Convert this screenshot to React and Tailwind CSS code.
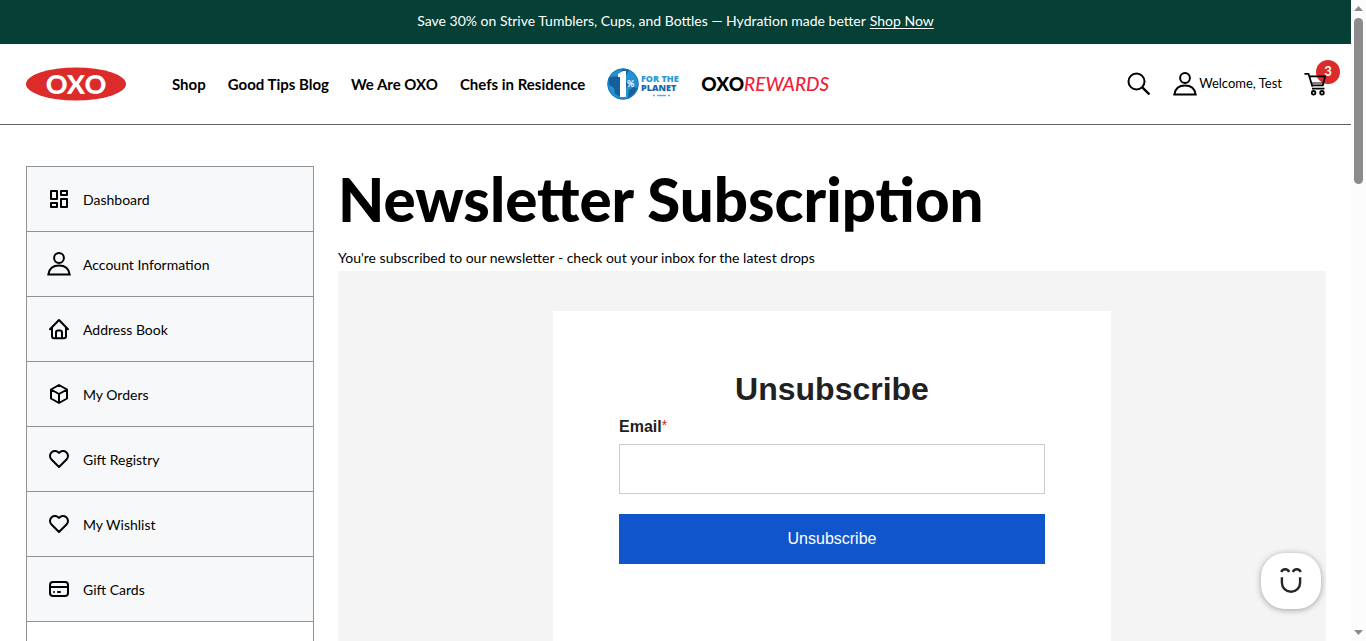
const iconProps = {
  width: 24,
  height: 24,
  viewBox: '0 0 24 24',
  fill: 'none',
  stroke: 'currentColor',
  strokeWidth: 2,
  'aria-hidden': true,
};

function DashboardIcon() {
  return (
    <svg {...iconProps}>
      <path d="M4 4h6v8H4zM14 4h6v4h-6zM14 12h6v8h-6zM4 16h6v4H4z" strokeLinejoin="round" />
    </svg>
  );
}

function UserIcon() {
  return (
    <svg {...iconProps}>
      <circle cx="12" cy="6" r="4.9" />
      <path d="M1.3 22.6C2.2 16.6 6.6 13.6 12 13.6s9.8 3 10.7 9z" />
    </svg>
  );
}

function HomeIcon() {
  return (
    <svg {...iconProps} strokeLinecap="round" strokeLinejoin="round">
      <path d="M3 12.2 12 3l9 9.2" />
      <path d="M5 11v8.2a2 2 0 0 0 2 2h10a2 2 0 0 0 2-2V11" />
      <path d="M9 21v-5.6a2 2 0 0 1 2-2h2a2 2 0 0 1 2 2V21" />
    </svg>
  );
}

function BoxIcon() {
  return (
    <svg {...iconProps} strokeLinejoin="round">
      <path d="m12 3 8 4.5v9L12 21l-8-4.5v-9zM12 12l8-4.5M12 12v9M12 12 4 7.5" />
    </svg>
  );
}

function HeartIcon() {
  return (
    <svg {...iconProps} strokeLinecap="round" strokeLinejoin="round">
      <path d="M19.5 12.572 12 20l-7.5-7.428A5 5 0 1 1 12 6.006a5 5 0 1 1 7.5 6.572" />
    </svg>
  );
}

function CardIcon() {
  return (
    <svg {...iconProps} strokeLinecap="round">
      <rect x="3" y="5" width="18" height="14" rx="3" />
      <path d="M3 10h18M7 15h.01M11 15h2" />
    </svg>
  );
}

const accountLinks = [
  ['Dashboard', DashboardIcon],
  ['Account Information', UserIcon],
  ['Address Book', HomeIcon],
  ['My Orders', BoxIcon],
  ['Gift Registry', HeartIcon],
  ['My Wishlist', HeartIcon],
  ['Gift Cards', CardIcon],
];

function OxoLogo() {
  return (
    <svg width="100" height="34" viewBox="0 0 100 34" role="img" aria-label="OXO">
      <ellipse cx="50" cy="17" rx="50" ry="16.6" fill="#db2b2b" />
      <text x="50" y="26.500" textAnchor="middle" fill="#fff" className="text-[27px] font-black">
        OXO
      </text>
    </svg>
  );
}

function PlanetLogo() {
  return (
    <svg width="76" height="34" viewBox="0 0 76 34" role="img" aria-label="1% for the Planet">
      <circle cx="16" cy="17" r="15.6" fill="#2491d0" />
      <path d="M2 11c4-3 8 0 10-3l4-6 6 1-4 8 3 7-4 5-3 7-6-3-1-6-5-3z" fill="#14609f" />
      <path d="M22 23l5-3 3 1c-2 5-5 8-9 10z" fill="#14609f" />
      <circle cx="16" cy="17" r="15.2" fill="none" stroke="#1b75b8" />
      <path d="M11 7l5-3h3v26h-6V10h-2z" fill="#fff" />
      <text x="20" y="20" fill="#fff" className="text-[9px] font-bold">%</text>
      <text x="34" y="15" fill="#2b9ad6" className="font-['Open_Sans'] text-[9px] font-extrabold">FOR THE</text>
      <text x="34" y="24" fill="#1766a8" className="font-['Open_Sans'] text-[9px] font-extrabold">PLANET</text>
      <path d="M46 28.5h2M50 28.5h9M61 28.5h2" stroke="#5fb0dc" strokeWidth="1.5" />
    </svg>
  );
}

function CartIcon() {
  return (
    <svg width="24" height="24" viewBox="0 0 24 24" fill="none" stroke="currentColor" strokeWidth="1.8" aria-hidden="true">
      <path d="M.5 1.8h4l4 13M6 4.3h15.200l-2.400 9H8M8 16.600h12.500" />
      <path d="M7.600 11h12" strokeWidth="1" />
      <circle cx="9.600" cy="20.800" r="1.800" />
      <circle cx="18" cy="20.800" r="1.800" />
    </svg>
  );
}

function Header() {
  return (
    <header>
      <div className="flex h-11 items-center justify-center gap-1 bg-[#063f36] pb-0.5 text-sm text-white">
        <span>Save 30% on Strive Tumblers, Cups, and Bottles — Hydration made better</span>
        <a href="#shop-now" className="underline underline-offset-2">Shop Now</a>
      </div>
      <div className="flex h-[81px] items-center border-b border-[#616166] pr-[11px] pl-[26px]">
        <a href="#home" aria-label="OXO home"><OxoLogo /></a>
        <nav className="ml-[46px] flex items-center gap-[22px] text-[15px] font-bold whitespace-nowrap">
          <a href="#shop">Shop</a>
          <a href="#blog">Good Tips Blog</a>
          <a href="#about">We Are OXO</a>
          <a href="#chefs">Chefs in Residence</a>
          <div className="flex items-center gap-[18px]">
            <a href="#planet" aria-label="1% for the Planet"><PlanetLogo /></a>
            <a href="#rewards" className="flex items-center text-[19px] font-normal">
              <span className="font-black">OXO</span>
              <span className="font-medium text-[#ef2038] italic">REWARDS</span>
            </a>
          </div>
        </nav>
        <div className="ml-auto flex items-center">
          <button type="button" aria-label="Search">
            <svg width="24" height="24" viewBox="0 0 24 24" fill="none" stroke="currentColor" strokeWidth="2" aria-hidden="true">
              <circle cx="9.5" cy="9.5" r="8" />
              <path d="m15.3 15.3 7.2 7.2" strokeWidth="2.4" />
            </svg>
          </button>
          <a href="#account" className="ml-[22px] flex items-center gap-0.5 text-[13px]">
            <UserIcon />
            Welcome, Test
          </a>
          <a href="#cart" aria-label="Cart, 3 items" className="relative ml-[22px] pr-3">
            <span className="absolute -top-3 right-0 flex size-6 items-center justify-center rounded-full bg-[#db2b2b] text-[13px] font-bold text-white">3</span>
            <span className="relative block"><CartIcon /></span>
          </a>
        </div>
      </div>
    </header>
  );
}

function Scrollbar() {
  return (
    <div aria-hidden="true" className="flex w-[15px] shrink-0 flex-col items-center bg-[#fcfcfc] py-1.5 text-[#8b8b8b]">
      <svg width="9" height="5" viewBox="0 0 9 5" fill="currentColor"><path d="M0 5 4.5 0 9 5z" /></svg>
      <div className="mt-[7px] h-[166px] w-[9px] rounded-full bg-[#8b8b8b]" />
      <svg className="mt-auto" width="9" height="5" viewBox="0 0 9 5" fill="currentColor"><path d="M0 0 4.5 5 9 0z" /></svg>
    </div>
  );
}

export default function App() {
  return (
    <div className="flex h-screen overflow-hidden bg-white font-['Lato',sans-serif] text-black">
      <div className="min-w-0 flex-1 overflow-hidden">
        <Header />
        <div className="flex gap-6 pt-[41px] pr-[25px] pl-[26px]">
          <nav aria-label="Account" className="w-72 shrink-0 border border-[#8f9193] text-sm">
            {accountLinks.map(([label, Icon]) => (
              <a key={label} href="#account" className="flex h-[65px] items-center gap-3 border-b border-[#8f9193] bg-[#f7f8fa] pl-5">
                <Icon />
                <span className="pt-0.5">{label}</span>
              </a>
            ))}
          </nav>
          <main className="min-w-0 flex-1">
            <h1 className="text-[60px] leading-[66px] font-black">Newsletter Subscription</h1>
            <p className="mt-3.5 pb-0.5 text-sm leading-[23px]">
              You're subscribed to our newsletter - check out your inbox for the latest drops
            </p>
            <div className="bg-[#f4f4f4] px-5 py-10 font-['Liberation_Sans',sans-serif] text-[#212121]">
              <form className="mx-auto max-w-[558px] bg-white px-[66px] pt-[58px] pb-24">
                <h2 className="text-center text-[32px] leading-10 font-bold">Unsubscribe</h2>
                <label htmlFor="email" className="mt-2 block text-base leading-[19px] font-bold">
                  Email<span className="align-top text-sm leading-4 font-normal text-[#e51520]">*</span>
                </label>
                <input id="email" type="email" required className="mt-2 block h-[50px] w-full border border-[#cccccc] px-3" />
                <button type="submit" className="mt-5 block h-[50px] w-full bg-[#1155cc] text-base text-white">Unsubscribe</button>
              </form>
            </div>
          </main>
        </div>
      </div>
      <Scrollbar />
      <button type="button" aria-label="Open chat" className="fixed right-[45px] bottom-8 flex h-14 w-[60px] items-center justify-center rounded-[24px] bg-white text-[#252525] shadow-[0_1px_6px_rgba(0,0,0,0.35)]">
        <svg width="24" height="28" viewBox="0 0 24 28" fill="none" stroke="currentColor" strokeWidth="2.4" aria-hidden="true">
          <path d="M2.3 5C3.500 1.400 8.900 1.400 10.100 5M13.900 5c1.200-3.600 6.600-3.600 7.800 0M2.900 10.300v5.400a9.100 9.100 0 0 0 18.200 0v-5.400" />
        </svg>
      </button>
    </div>
  );
}
